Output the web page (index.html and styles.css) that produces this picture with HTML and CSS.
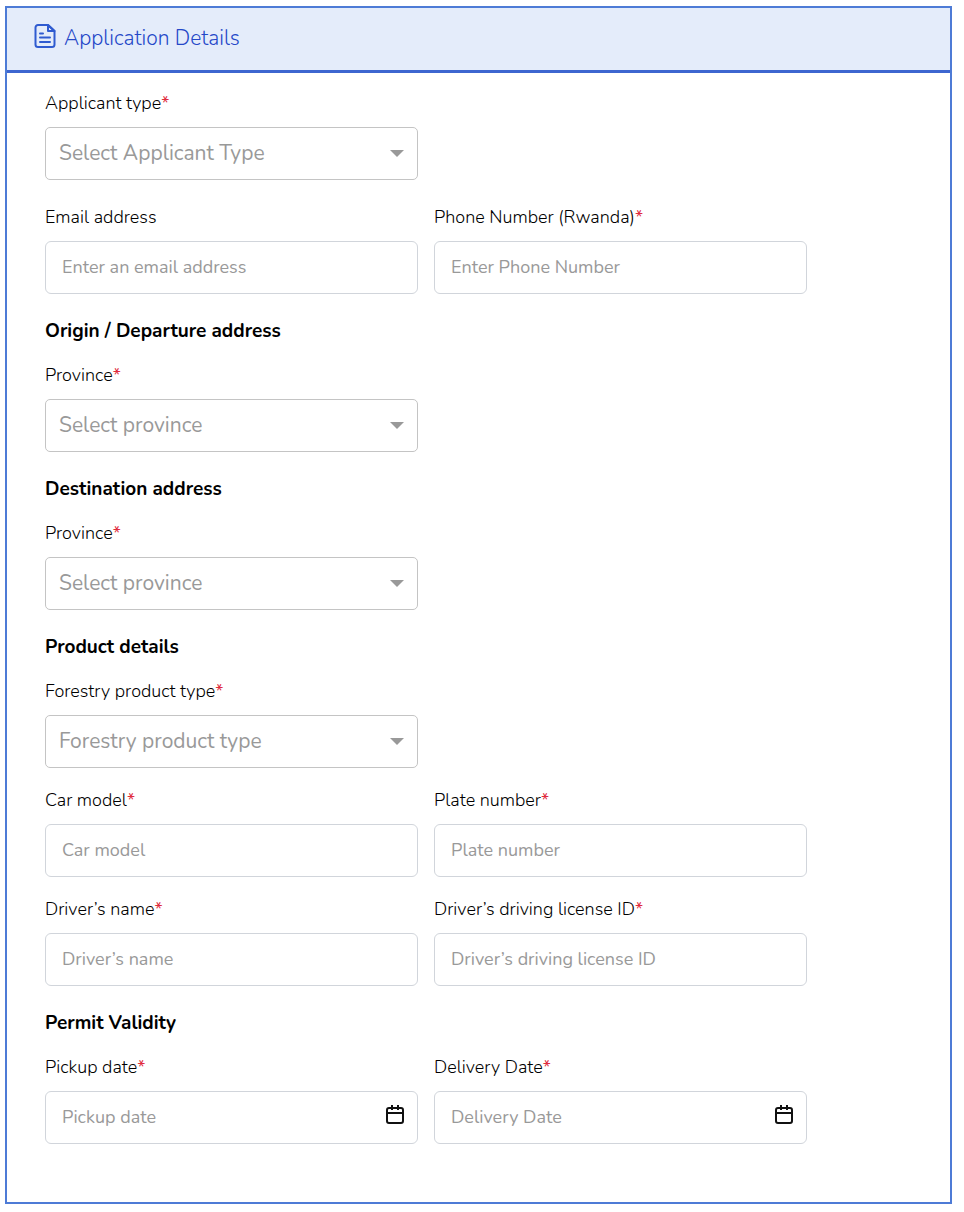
FILE: index.html
```html
<!DOCTYPE html>
<html lang="en">

<head>
  <meta charset="UTF-8">
  <meta name="viewport" content="width=device-width, initial-scale=1.0">
  <title>Application Details</title>
  <link rel="stylesheet" href="styles.css">
</head>

<body>
  <main class="card">
    <header class="card-header">
      <svg class="doc-icon" viewBox="0 0 22 26" width="22" height="26">
        <path d="M14 2H4A2.500 2.500 0 0 0 1.500 4.500v17A2.500 2.500 0 0 0 4 24h14a2.500 2.500 0 0 0 2.500-2.500V8z" />
        <path d="M14 2v6h6.500z" />
        <path d="M6 10.500h3M6 14.500h10M6 19h10" />
      </svg>
      <h1 class="card-title">Application Details</h1>
    </header>

    <form class="form">
      <section class="section">
        <div class="row">
          <div class="field">
            <label class="label" for="applicant-type">Applicant type<span class="required">*</span></label>
            <div class="select-wrap">
              <select class="control select" id="applicant-type">
                <option>Select Applicant Type</option>
              </select>
            </div>
          </div>
        </div>
      </section>

      <section class="section">
        <div class="row">
          <div class="field">
            <label class="label" for="email">Email address</label>
            <input class="control" id="email" type="email" placeholder="Enter an email address">
          </div>
          <div class="field">
            <label class="label" for="phone">Phone Number (Rwanda)<span class="required">*</span></label>
            <input class="control" id="phone" type="tel" placeholder="Enter Phone Number">
          </div>
        </div>
      </section>

      <section class="section">
        <h2 class="section-title">Origin / Departure address</h2>
        <div class="row">
          <div class="field">
            <label class="label" for="origin-province">Province<span class="required">*</span></label>
            <div class="select-wrap">
              <select class="control select" id="origin-province">
                <option>Select province</option>
              </select>
            </div>
          </div>
        </div>
      </section>

      <section class="section">
        <h2 class="section-title">Destination address</h2>
        <div class="row">
          <div class="field">
            <label class="label" for="destination-province">Province<span class="required">*</span></label>
            <div class="select-wrap">
              <select class="control select" id="destination-province">
                <option>Select province</option>
              </select>
            </div>
          </div>
        </div>
      </section>

      <section class="section">
        <h2 class="section-title">Product details</h2>
        <div class="row">
          <div class="field">
            <label class="label" for="product-type">Forestry product type<span class="required">*</span></label>
            <div class="select-wrap">
              <select class="control select" id="product-type">
                <option>Forestry product type</option>
              </select>
            </div>
          </div>
        </div>
        <div class="row">
          <div class="field">
            <label class="label" for="car-model">Car model<span class="required">*</span></label>
            <input class="control" id="car-model" type="text" placeholder="Car model">
          </div>
          <div class="field">
            <label class="label" for="plate-number">Plate number<span class="required">*</span></label>
            <input class="control" id="plate-number" type="text" placeholder="Plate number">
          </div>
        </div>
        <div class="row">
          <div class="field">
            <label class="label" for="driver-name">Driver’s name<span class="required">*</span></label>
            <input class="control" id="driver-name" type="text" placeholder="Driver’s name">
          </div>
          <div class="field">
            <label class="label" for="license">Driver’s driving license ID<span class="required">*</span></label>
            <input class="control" id="license" type="text" placeholder="Driver’s driving license ID">
          </div>
        </div>
      </section>

      <section class="section">
        <h2 class="section-title">Permit Validity</h2>
        <div class="row">
          <div class="field">
            <label class="label" for="pickup-date">Pickup date<span class="required">*</span></label>
            <div class="date-wrap">
              <input class="control" id="pickup-date" type="text" placeholder="Pickup date">
              <button class="date-button" type="button" aria-label="Choose pickup date">
                <svg class="calendar-icon" viewBox="0 0 18 20" width="18" height="20">
                  <rect x="1" y="3" width="16" height="15" rx="2" />
                  <path d="M1 8h16M6 0v5M12 0v5" />
                </svg>
              </button>
            </div>
          </div>
          <div class="field">
            <label class="label" for="delivery-date">Delivery Date<span class="required">*</span></label>
            <div class="date-wrap">
              <input class="control" id="delivery-date" type="text" placeholder="Delivery Date">
              <button class="date-button" type="button" aria-label="Choose delivery date">
                <svg class="calendar-icon" viewBox="0 0 18 20" width="18" height="20">
                  <rect x="1" y="3" width="16" height="15" rx="2" />
                  <path d="M1 8h16M6 0v5M12 0v5" />
                </svg>
              </button>
            </div>
          </div>
        </div>
      </section>
    </form>
  </main>
</body>

</html>
```

FILE: styles.css
```css
* {
  box-sizing: border-box;
}

body {
  margin: 0;
  padding: 6px 12px 8px 5px;
  background: #fff;
  color: #000;
  font-family: Nunito, Lato, "Open Sans", sans-serif;
  font-size: 18px;
}

.card {
  border: 2px solid #4d7bd6;
}

.card-header {
  display: flex;
  align-items: center;
  gap: 8px;
  height: 65px;
  padding: 0 27px 3px;
  border-bottom: 3px solid #3d66d0;
  background: #e4ecfa;
}

.card-title {
  margin: 0;
  color: #2448c8;
  font-size: 21px;
  font-weight: 300;
  line-height: 28px;
}

.doc-icon {
  margin-bottom: 3px;
  fill: none;
  stroke: #2f5bd0;
  stroke-width: 2;
  stroke-linecap: round;
  stroke-linejoin: round;
}

.form {
  display: flex;
  flex-direction: column;
  gap: 25px;
  max-width: 838px;
  padding: 18px 38px 58px;
}

.section {
  display: flex;
  flex-direction: column;
  gap: 20px;
}

.section-title {
  margin: 0;
  font-size: 19px;
  font-weight: 700;
  line-height: 24px;
}

.row {
  display: grid;
  grid-template-columns: 1fr 1fr;
  gap: 16px;
}

.label {
  display: block;
  margin-bottom: 12px;
  font-weight: 300;
  line-height: 24px;
}

.required {
  color: #e02b3c;
  font-weight: 400;
}

.control {
  display: block;
  width: 100%;
  height: 53px;
  padding: 0 16px 2px;
  border: 1px solid #d1d5db;
  border-radius: 6px;
  background: #fff;
  color: #111;
  font: inherit;
}

.control::placeholder {
  color: #999;
  opacity: 1;
}

.select {
  padding: 0 40px 2px 13px;
  border-color: #c4c4c4;
  border-radius: 5px;
  color: #999;
  font-size: 21px;
  appearance: none;
}

.select-wrap,
.date-wrap {
  position: relative;
}

/* dropdown arrow */
.select-wrap::after {
  content: "";
  position: absolute;
  top: 23px;
  right: 14px;
  border: 7px solid transparent;
  border-top-color: #999;
  border-bottom: 0;
  pointer-events: none;
}

.date-button {
  position: absolute;
  top: 14px;
  right: 14px;
  display: flex;
  padding: 0;
  border: 0;
  background: none;
}

.calendar-icon {
  fill: none;
  stroke: #111;
  stroke-width: 2;
}
```
